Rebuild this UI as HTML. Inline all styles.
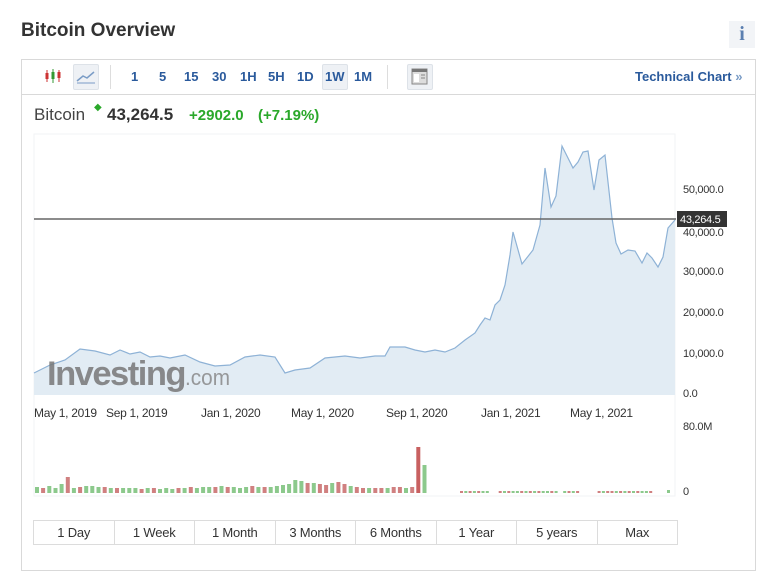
<!DOCTYPE html>
<html><head><meta charset="utf-8"><style>
body{margin:0;width:773px;height:554px;background:#fff;font-family:"Liberation Sans",Arial,sans-serif;position:relative;overflow:hidden}
.a{position:absolute}
h1{position:absolute;left:21px;top:20px;margin:0;font-size:19px;font-weight:bold;color:#333}
.info{left:729px;top:21px;width:26px;height:27px;background:#f2f4f7;color:#5b7fb0;font:bold 20px "Liberation Serif",serif;text-align:center;line-height:27px}
.box{left:21px;top:59px;width:733px;height:510px;border:1px solid #d9d9d9}
.tb{left:21px;top:59px;width:734px;height:35px;border-bottom:1px solid #d9d9d9}
.iv{font-size:13px;font-weight:bold;color:#2a5a9c;top:69px}
.btns{left:33px;top:520px;width:643px;height:23px;border:1px solid #dcdcdc;display:flex}
.btns div{flex:1;text-align:center;font-size:13px;color:#333;line-height:23px;border-right:1px solid #dcdcdc;letter-spacing:-0.2px}
.btns div:last-child{border-right:none}
.ax{font-size:11px;color:#333;letter-spacing:-0.3px}
</style></head><body>
<h1>Bitcoin Overview</h1>
<div class="a info">i</div>
<div class="a box"></div>
<div class="a tb"></div>
<svg class="a" style="left:44px;top:67px" width="20" height="18"><g stroke-width="1"><line x1="3" y1="3" x2="3" y2="15" stroke="#c33"/><rect x="1.5" y="6" width="3" height="6" fill="#c33"/><line x1="9" y1="2" x2="9" y2="16" stroke="#393"/><rect x="7.5" y="5" width="3" height="7" fill="#393"/><line x1="15" y1="3" x2="15" y2="15" stroke="#c33"/><rect x="13.5" y="5" width="3" height="6" fill="#c33"/></g></svg>
<div class="a" style="left:73px;top:64px;width:24px;height:24px;background:#eef1f5;border:1px solid #dde2e8;border-radius:2px"></div>
<svg class="a" style="left:76px;top:68px" width="20" height="16"><path d="M1 13 L7 8 L11 10 L18 4" stroke="#7a9cc6" stroke-width="1.5" fill="none"/><line x1="1" y1="15" x2="19" y2="15" stroke="#7a9cc6"/></svg>
<div class="a" style="left:110px;top:65px;width:1px;height:24px;background:#ddd"></div>
<div class="a iv" style="left:131px">1</div>
<div class="a iv" style="left:159px">5</div>
<div class="a iv" style="left:184px">15</div>
<div class="a iv" style="left:212px">30</div>
<div class="a iv" style="left:240px">1H</div>
<div class="a iv" style="left:268px">5H</div>
<div class="a iv" style="left:297px">1D</div>
<div class="a" style="left:322px;top:64px;width:24px;height:24px;background:#eef1f5;border:1px solid #dde2e8;border-radius:2px"></div>
<div class="a iv" style="left:325px">1W</div>
<div class="a iv" style="left:354px">1M</div>
<div class="a" style="left:387px;top:65px;width:1px;height:24px;background:#ddd"></div>
<div class="a" style="left:407px;top:64px;width:24px;height:24px;background:#eef1f5;border:1px solid #dde2e8;border-radius:2px"></div>
<svg class="a" style="left:411px;top:68px" width="17" height="17"><rect x="1" y="1" width="15" height="15" fill="#ddd" stroke="#888"/><rect x="1" y="1" width="15" height="3" fill="#777"/><rect x="3" y="6" width="5" height="8" fill="#fff"/><line x1="10" y1="7" x2="14" y2="7" stroke="#888"/><line x1="10" y1="10" x2="14" y2="10" stroke="#888"/></svg>
<div class="a iv" style="left:635px">Technical Chart <span style="color:#7a9cc6">»</span></div>
<div class="a" style="left:34px;top:105px;font-size:17px;color:#444">Bitcoin</div>
<div class="a" style="left:94px;top:102px;color:#2aa82a;font-size:10px">◆</div>
<div class="a" style="left:107px;top:105px;font-size:17px;font-weight:bold;color:#333">43,264.5</div>
<div class="a" style="left:189px;top:107px;font-size:15px;font-weight:bold;color:#2aa82a">+2902.0</div>
<div class="a" style="left:258px;top:107px;font-size:15px;font-weight:bold;color:#2aa82a">(+7.19%)</div>
<svg class="a" style="left:0;top:0" width="773" height="554">
<rect x="34" y="134" width="641" height="362" fill="none" stroke="#f2f3f5"/>
<polygon fill="#e2ecf4" points="34,373 50,365 65,360 80,349 95,351 110,355 120,350 130,354 140,352 150,357 160,356 170,358 185,355 200,362 215,366 230,365 245,357 260,355 275,357 285,373 295,370 310,368 325,358 345,356 360,358 375,356 385,356 390,347 405,347 415,350 425,352 435,350 445,352 455,348 465,340 475,333 480,325 485,318 490,320 495,305 500,300 505,285 510,255 513,232 522,264 533,250 540,225 545,168 551,207 556,196 562,146 573,168 578,162 583,152 588,151 594,190 599,160 605,155 612,218 616,243 621,254 628,250 635,251 642,263 647,253 652,258 658,267 663,257 668,228 675,220 675,395 34,395"/>
<polyline fill="none" stroke="#8eb2d6" stroke-width="1.2" points="34,373 50,365 65,360 80,349 95,351 110,355 120,350 130,354 140,352 150,357 160,356 170,358 185,355 200,362 215,366 230,365 245,357 260,355 275,357 285,373 295,370 310,368 325,358 345,356 360,358 375,356 385,356 390,347 405,347 415,350 425,352 435,350 445,352 455,348 465,340 475,333 480,325 485,318 490,320 495,305 500,300 505,285 510,255 513,232 522,264 533,250 540,225 545,168 551,207 556,196 562,146 573,168 578,162 583,152 588,151 594,190 599,160 605,155 612,218 616,243 621,254 628,250 635,251 642,263 647,253 652,258 658,267 663,257 668,228 675,220"/>
<line x1="34" y1="219" x2="676" y2="219" stroke="#666" stroke-width="1.5"/>
<text x="47" y="385" font-family="Liberation Sans" font-weight="bold" font-size="34" fill="#777" fill-opacity="0.85" letter-spacing="-1.5" textLength="138" lengthAdjust="spacingAndGlyphs">Investing</text>
<text x="185" y="385" font-family="Liberation Sans" font-size="22" fill="#888" fill-opacity="0.85" textLength="45" lengthAdjust="spacingAndGlyphs">.com</text>
<rect x="677" y="211" width="50" height="16" fill="#333"/>
<text x="680" y="223" font-family="Liberation Sans" font-size="11" fill="#fff" letter-spacing="-0.3">43,264.5</text>
<g id="vol"></g>
</svg>
<div class="a ax" style="left:683px;top:184px">50,000.0</div>
<div class="a ax" style="left:683px;top:227px">40,000.0</div>
<div class="a ax" style="left:683px;top:266px">30,000.0</div>
<div class="a ax" style="left:683px;top:307px">20,000.0</div>
<div class="a ax" style="left:683px;top:348px">10,000.0</div>
<div class="a ax" style="left:683px;top:388px">0.0</div>
<div class="a ax" style="left:683px;top:421px">80.0M</div>
<div class="a ax" style="left:683px;top:486px">0</div>
<div class="a" style="left:34px;top:406px;font-size:12px;color:#333;width:650px;letter-spacing:-0.3px">
<span class="a" style="left:0">May 1, 2019</span><span class="a" style="left:72px">Sep 1, 2019</span><span class="a" style="left:167px">Jan 1, 2020</span><span class="a" style="left:257px">May 1, 2020</span><span class="a" style="left:352px">Sep 1, 2020</span><span class="a" style="left:447px">Jan 1, 2021</span><span class="a" style="left:536px">May 1, 2021</span></div>
<div class="a btns"><div>1 Day</div><div>1 Week</div><div>1 Month</div><div>3 Months</div><div>6 Months</div><div>1 Year</div><div>5 years</div><div>Max</div></div>
<script>
var g=document.getElementById('vol'),s='';
var hs=[6,5,7,5,9,16,5,6,7,7,6,6,5,5,5,5,5,4,5,5,4,5,4,5,5,6,5,6,6,6,7,6,6,5,6,7,6,6,6,7,8,9,13,12,10,10,9,8,10,11,9,7,6,5,5,5,5,5,6,6,5,6,46,28];
for(var i=0;i<hs.length;i++){var x=35+i*6.15,c=(i%3==0||i>=40&&i<44)?'#8cc98c':'#d08080';if(i==63||i%2==0&&i<40)c='#8cc98c';if(i==62)c='#c86060';s+='<rect x="'+x.toFixed(1)+'" y="'+(493-hs[i])+'" width="4" height="'+hs[i]+'" fill="'+c+'"/>';}
for(var x=460;x<650;x+=4.3){if((x>490&&x<498)||(x>557&&x<562)||(x>578&&x<594))continue;s+='<rect x="'+x.toFixed(1)+'" y="491" width="3" height="2" fill="'+(x%3<1.5?'#d08080':'#8cc98c')+'"/>';}
s+='<rect x="667" y="490" width="3" height="3" fill="#8cc98c"/>';
g.innerHTML=s;
</script>
</body></html>
